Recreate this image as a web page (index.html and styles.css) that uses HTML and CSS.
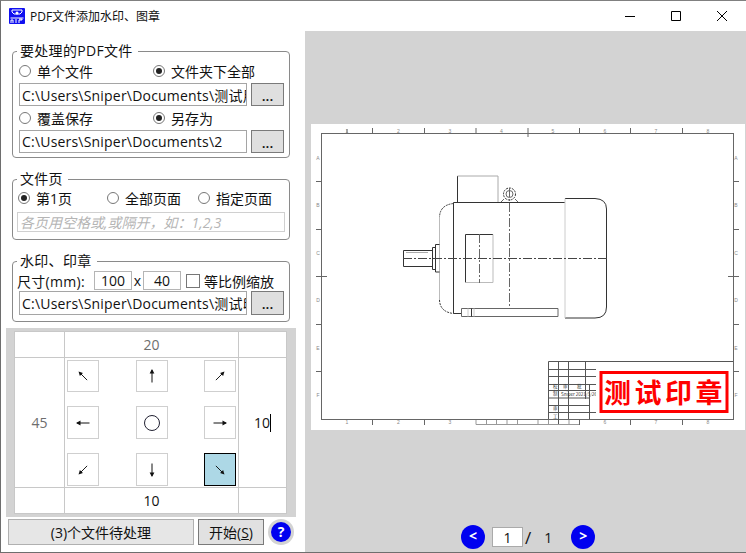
FILE: index.html
```html
<!DOCTYPE html>
<html lang="zh-CN">
<head>
  <meta charset="UTF-8">
  <title>PDF文件添加水印、图章</title>
  <link rel="stylesheet" href="styles.css">
</head>
<body>
<svg class="defs" width="0" height="0">
  <symbol id="arrow" viewBox="0 0 16 16">
    <path d="M1.5 8H14" fill="none" stroke="#111" stroke-width="1"/>
    <path d="M15 8L10.5 5.6V10.4Z" fill="#111"/>
  </symbol>
</svg>

<div class="window">
  <header class="titlebar">
    <svg class="logo" viewBox="0 0 16 16">
      <rect width="16" height="16" rx="1" fill="#1010f0"/>
      <path d="M3 2h10v2l-2 2H5L3 4Z" fill="none" stroke="#fff"/>
      <circle cx="8" cy="5" r="1.5" fill="#fff"/>
      <path d="M1.5 10h13M2 12h2v3M2 12v3M7 11v4M10 11h3v1h-3v3" fill="none" stroke="#fff"/>
    </svg>
    <span class="title">PDF文件添加水印、图章</span>
    <div class="controls">
      <svg class="ctl" viewBox="0 0 46 30"><path d="M18 15.5H28" stroke="#000" fill="none"/></svg>
      <svg class="ctl" viewBox="0 0 46 30"><path d="M18.5 10.5h9v9h-9Z" stroke="#000" fill="none"/></svg>
      <svg class="ctl" viewBox="0 0 46 30"><path d="M18 10l10 10M28 10L18 20" stroke="#000" fill="none"/></svg>
    </div>
  </header>

  <div class="main">
    <section class="side">
      <fieldset class="group group-files">
        <legend>要处理的PDF文件</legend>
        <div class="radios">
          <label class="radio"><i class="dot"></i>单个文件</label>
          <label class="radio"><i class="dot on"></i>文件夹下全部</label>
        </div>
        <div class="pathrow">
          <input class="path" value="C:\Users\Sniper\Documents\测试用例文件夹" readonly>
          <button class="browse">...</button>
        </div>
        <div class="radios">
          <label class="radio"><i class="dot"></i>覆盖保存</label>
          <label class="radio"><i class="dot on"></i>另存为</label>
        </div>
        <div class="pathrow">
          <input class="path" value="C:\Users\Sniper\Documents\2" readonly>
          <button class="browse">...</button>
        </div>
      </fieldset>

      <fieldset class="group group-pages">
        <legend>文件页</legend>
        <div class="radios pages">
          <label class="radio"><i class="dot on"></i>第1页</label>
          <label class="radio"><i class="dot"></i>全部页面</label>
          <label class="radio"><i class="dot"></i>指定页面</label>
        </div>
        <input class="pagelist" placeholder="各页用空格或,或隔开，如：1,2,3" readonly>
      </fieldset>

      <fieldset class="group group-mark">
        <legend>水印、印章</legend>
        <div class="sizerow">
          <span class="sizelabel">尺寸(mm):</span>
          <input class="num" value="100" readonly>
          <span class="times">x</span>
          <input class="num" value="40" readonly>
          <i class="check"></i>
          <span>等比例缩放</span>
        </div>
        <div class="pathrow">
          <input class="path" value="C:\Users\Sniper\Documents\测试印章.png" readonly>
          <button class="browse">...</button>
        </div>
      </fieldset>

      <div class="margins">
        <div class="grid">
          <div class="cell"></div>
          <div class="cell val muted">20</div>
          <div class="cell"></div>
          <div class="cell val muted">45</div>
          <div class="cell pad">
            <button class="pos"><svg class="arrow nw"><use href="#arrow"/></svg></button>
            <button class="pos"><svg class="arrow n"><use href="#arrow"/></svg></button>
            <button class="pos"><svg class="arrow ne"><use href="#arrow"/></svg></button>
            <button class="pos"><svg class="arrow w"><use href="#arrow"/></svg></button>
            <button class="pos"><i class="ring"></i></button>
            <button class="pos"><svg class="arrow e"><use href="#arrow"/></svg></button>
            <button class="pos"><svg class="arrow sw"><use href="#arrow"/></svg></button>
            <button class="pos"><svg class="arrow s"><use href="#arrow"/></svg></button>
            <button class="pos active"><svg class="arrow se"><use href="#arrow"/></svg></button>
          </div>
          <div class="cell val"><span class="caret">10</span></div>
          <div class="cell"></div>
          <div class="cell val">10</div>
          <div class="cell"></div>
        </div>
      </div>

      <div class="actions">
        <button class="status">(3)个文件待处理</button>
        <button class="start">开始(<u>S</u>)</button>
        <span class="help">?</span>
      </div>
    </section>

    <section class="viewer">
      <svg class="sheet" viewBox="311 124 434 306">
        <rect x="311" y="124" width="434" height="306" fill="#fff"/>
        <g fill="none" stroke="#666">
          <rect x="321.5" y="133.5" width="412" height="286"/>
          <path d="M347 129v4M372.5 128v5M424.5 128v5M476 128v5M528 128v9M579.5 128v5M630.5 128v5M682.5 128v5"/>
          <path d="M372.5 420v5M424.5 420v5M579.5 420v5M630.5 420v5M682.5 420v5"/>
          <path d="M316 181.5h5M316 229.5h5M316 276.5h11M316 324.5h5M316 371.5h5"/>
          <path d="M734 181.5h5M734 229.5h5M728 276.5h11M734 324.5h5M734 371.5h5"/>
        </g>
        <g class="ruler">
          <text x="347" y="133">1</text><text x="398.5" y="133">2</text><text x="450" y="133">3</text><text x="501.5" y="133">4</text>
          <text x="553" y="133">5</text><text x="605" y="133">6</text><text x="656" y="133">7</text><text x="708" y="133">8</text>
          <text x="347" y="424">1</text><text x="398.5" y="424">2</text><text x="450" y="424">3</text>
          <text x="605" y="424">6</text><text x="656" y="424">7</text><text x="708" y="424">8</text>
          <text x="318" y="160">A</text><text x="318" y="207">B</text><text x="318" y="255">C</text>
          <text x="318" y="302">D</text><text x="318" y="350">E</text><text x="318" y="397">F</text>
          <text x="736" y="160">A</text><text x="736" y="207">B</text><text x="736" y="255">C</text>
          <text x="736" y="302">D</text><text x="736" y="350">E</text><text x="736" y="397">F</text>
        </g>
        <g fill="none" stroke="#333">
          <path d="M457.5 202V176" />
          <path d="M457.5 176h40.500v26" stroke="#aaa"/>
          <path d="M453.5 202.5H565M453.5 202.5V313.5H461"/>
          <path d="M565 198.5H595Q606.5 199 606.5 209V307Q606.5 318 595 318H565"/>
          <path d="M565 198.5V318" stroke="#ccc"/>
          <path d="M453.5 203.5Q440 205 439.5 217" stroke-dasharray="2 1"/>
          <path d="M439.5 217V300" stroke="#bbb"/>
          <path d="M439.5 300Q440 312 453.5 313.5" stroke-dasharray="2 1"/>
          <path d="M435.5 244.5h4M435.5 244.5v27.500h4M432.5 247.500h3v22h-3Z"/>
          <path d="M432.500 250.500H403.500V266.500H432.500" />
          <path d="M406 252.500H428" stroke="#aaa"/>
          <path d="M465.500 282.500V234.500H493" />
          <path d="M493 234.500V282.500H465.500" stroke="#bbb"/>
          <path d="M461.500 308.500H558V316.500H461.500Z" stroke="#666"/>
          <path d="M471.500 308.500v8" />
          <path d="M468 308.500v8M474 308.500v8" stroke="#ccc"/>
          <circle cx="509.500" cy="194" r="6" stroke-dasharray="2 1"/>
          <circle cx="509.500" cy="194" r="3.500" stroke="#666"/>
          <path d="M501 202l3-3M515 199l3 3" stroke="#666"/>
          <path d="M403 258.500H607" stroke="#444" stroke-dasharray="9 2 2 2"/>
          <path d="M509.500 188V309" stroke="#666" stroke-dasharray="9 2 2 2"/>
          <path d="M479.500 234V283" stroke="#666" stroke-dasharray="9 2 2 2"/>
        </g>
        <g fill="none" stroke="#555">
          <path d="M548.500 361.500H733M548.500 361.500V419M548.500 369.500H596M548.500 376.500H596M548.500 384.500H596"/>
          <path d="M548.500 390.500H596M548.500 398H590M548.500 405.500H590M548.500 412.500H596"/>
          <path d="M558.500 361.500V424M568.500 361.500V419M585.500 361.500V399M589.500 384V419" />
          <path d="M476 424.500H579M476 420V424.500M486.500 420V424.500M496.500 420V424.500M507 420V424.500M517.500 420V424.500M538 420V424.500M548.500 420V424.500M569 420V424.500" stroke="#999"/>
        </g>
        <g class="tiny">
          <text x="553" y="388">校</text><text x="563" y="388">审</text><text x="577" y="388">批</text>
          <text x="553" y="395">制</text><text x="561" y="395.500">Sniper 2021/3/26</text>
          <text x="553" y="410">审</text><text x="553" y="418">工</text>
        </g>
        <rect x="596" y="368" width="137" height="51" fill="#fff"/>
        <rect x="601" y="372.500" width="126" height="39" fill="#fff" stroke="#f00" stroke-width="3"/>
        <text class="stamp" x="665" y="402.500">测试印章</text>
      </svg>

      <nav class="pager">
        <span class="round prev">&lt;</span>
        <input class="pageno" value="1" readonly>
        <span class="slash">/</span>
        <span class="total">1</span>
        <span class="round next">&gt;</span>
      </nav>
    </section>
  </div>
</div>
</body>
</html>
```

FILE: styles.css
```css
* {
  box-sizing: border-box;
}

body {
  margin: 0;
  font-family: "Open Sans", "Noto Sans CJK SC", sans-serif;
  font-size: 14px;
  color: #111;
  background: #fff;
}

.defs {
  position: absolute;
}

input,
button {
  font: inherit;
  color: inherit;
  outline: none;
}

.window {
  width: 746px;
  height: 553px;
  display: flex;
  flex-direction: column;
  border: 1px solid #6e6e6e;
  border-top-color: #808080;
  border-right: none;
}

/* title bar */
.titlebar {
  height: 30px;
  display: flex;
  align-items: center;
  padding: 0 1px 0 8px;
  background: #fff;
}

.logo {
  width: 16px;
  height: 16px;
}

.title {
  margin-left: 5px;
  font-size: 12px;
}

.controls {
  margin-left: auto;
  display: flex;
}

.ctl {
  width: 46px;
  height: 30px;
  display: block;
}

.main {
  flex: 1;
  display: flex;
  min-height: 0;
}

/* left column */
.side {
  width: 304px;
  display: flex;
  flex-direction: column;
  padding: 12px 0 0 5px;
}

.group {
  margin: 0 0 0 6px;
  width: 278px;
  padding: 0 4px 0 6px;
  border: 1px solid #8a8a8a;
  border-radius: 4px;
  min-width: 0;
}

.group legend {
  margin-left: -2px;
  padding: 0 5px 0 3px;
  line-height: 16px;
  letter-spacing: 0.3px;
}

.group-files {
  height: 115px;
}

.group-pages {
  margin-top: 13px;
  height: 69px;
}

.group-mark {
  margin-top: 13px;
  height: 69px;
}

.radios {
  display: grid;
  grid-template-columns: 134px 1fr;
  height: 24px;
  align-items: center;
}

.radios.pages {
  grid-template-columns: 89px 91px 1fr;
  height: 20px;
  margin: 1px 0 0 -1px;
}

.radio {
  display: flex;
  align-items: center;
  gap: 6px;
  white-space: nowrap;
}

.dot {
  width: 12px;
  height: 12px;
  border: 1px solid #777;
  border-radius: 50%;
  background: #fff;
  display: flex;
  align-items: center;
  justify-content: center;
}

.dot.on::after {
  content: "";
  width: 6px;
  height: 6px;
  border-radius: 50%;
  background: #222;
}

.pathrow {
  display: flex;
  gap: 4px;
  height: 23px;
}

.group-mark .pathrow {
  height: 24px;
}

.path {
  flex: 0 0 228px;
  width: 228px;
  height: 100%;
  padding: 0 0 0 2px;
  border: 1px solid #a5a5a5;
  background: #fff;
  letter-spacing: 0.2px;
}

.browse {
  width: 33px;
  height: 100%;
  padding: 0;
  border: 1px solid #7a7a7a;
  background: #dfdfdf;
  font-weight: 600;
  line-height: 24px;
}

.pagelist {
  display: block;
  width: 268px;
  height: 20px;
  margin: 4px 0 0 -2px;
  padding: 0 2px;
  border: 1px solid #d0d0d0;
}

.pagelist::placeholder {
  color: #b5b5b5;
  font-style: italic;
  opacity: 1;
}

.sizerow {
  display: flex;
  align-items: center;
  height: 19px;
  margin: 2px 0 1px -2px;
}

.sizelabel {
  letter-spacing: 0.3px;
}

.num {
  width: 38px;
  height: 19px;
  padding: 0;
  text-align: center;
  border: 1px solid #b5b5b5;
}

.sizelabel + .num {
  margin-left: 9px;
}

.times {
  width: 11px;
  text-align: center;
}

.check {
  width: 14px;
  height: 14px;
  margin: 0 4px 0 5px;
  border: 1px solid #777;
}

/* margin editor */
.margins {
  width: 290px;
  height: 189px;
  margin: 6px 0 0 0;
  padding: 3px 8px 3px 8px;
  background: #d3d3d3;
}

.grid {
  display: grid;
  grid-template-columns: 49px 173px 1fr;
  grid-template-rows: 25px 1fr 25px;
  width: 273px;
  height: 183px;
  background: #c8c8c8;
  gap: 1px;
  border: 1px solid #c8c8c8;
}

.cell {
  background: #fff;
}

.val {
  display: flex;
  align-items: center;
  justify-content: center;
}

.muted {
  color: #6e6e6e;
}

.caret {
  border-right: 1px solid #000;
  line-height: 18px;
}

.pad {
  display: grid;
  grid-template-columns: repeat(3, 32px);
  grid-template-rows: 32px 33px 33px;
  justify-content: space-between;
  align-content: space-between;
  padding: 2px 2px 1px 2px;
}

.pos {
  padding: 0;
  border: 1px solid #cfcfcf;
  background: #fff;
  display: flex;
  align-items: center;
  justify-content: center;
}

.pos.active {
  border-color: #000;
  background: #add8e6;
}

.ring {
  width: 16px;
  height: 16px;
  border: 1px solid #223;
  border-radius: 50%;
}

.arrow {
  width: 16px;
  height: 16px;
}

.arrow.e { transform: rotate(0deg); }
.arrow.se { transform: rotate(45deg) scale(0.9); }
.arrow.s { transform: rotate(90deg); }
.arrow.sw { transform: rotate(135deg) scale(0.9); }
.arrow.w { transform: rotate(180deg); }
.arrow.nw { transform: rotate(225deg) scale(0.9); }
.arrow.n { transform: rotate(270deg); }
.arrow.ne { transform: rotate(315deg) scale(0.9); }

.actions {
  display: flex;
  align-items: center;
  margin: 2px 0 0 2px;
}

.status {
  width: 186px;
  height: 26px;
  padding: 0;
  border: 1px solid #b0b0b0;
  background: #e6e6e6;
}

.start {
  width: 66px;
  height: 26px;
  margin-left: 4px;
  padding: 0;
  border: 1px solid #7a7a7a;
  background: #e1e1e1;
}

.help {
  width: 20px;
  height: 20px;
  margin-left: 7px;
  border-radius: 50%;
  background: #0000f0;
  box-shadow: 0 0 0 3px #d3d3d3;
  color: #fff;
  font-weight: 700;
  text-align: center;
  line-height: 20px;
}

/* right column */
.viewer {
  flex: 1;
  display: flex;
  flex-direction: column;
  align-items: flex-end;
  background: #d3d3d3;
}

.sheet {
  display: block;
  width: 434px;
  height: 306px;
  margin-top: 93px;
  margin-right: 1px;
}

.ruler text {
  font-family: "Liberation Sans", sans-serif;
  font-size: 5px;
  fill: #888;
  text-anchor: middle;
}

.tiny text {
  font-family: "Noto Sans CJK SC", sans-serif;
  font-size: 4.500px;
  fill: #333;
}

.stamp {
  font-family: "Noto Sans CJK SC", sans-serif;
  font-size: 27px;
  font-weight: 700;
  letter-spacing: 3.500px;
  fill: #f00;
  text-anchor: middle;
}

.pager {
  width: 100%;
  display: flex;
  align-items: center;
  margin-top: 95px;
  padding-left: 156px;
}

.round {
  width: 24px;
  height: 24px;
  border-radius: 50%;
  background: #0000f0;
  color: #fff;
  font-weight: 700;
  text-align: center;
  line-height: 22px;
}

.pageno {
  width: 31px;
  height: 20px;
  margin-left: 7px;
  padding: 0;
  border: 1px solid #aaa;
  text-align: center;
}

.slash {
  margin-left: 2px;
  font-size: 17px;
}

.total {
  margin-left: 13px;
}

.next {
  margin-left: 19px;
}
```
